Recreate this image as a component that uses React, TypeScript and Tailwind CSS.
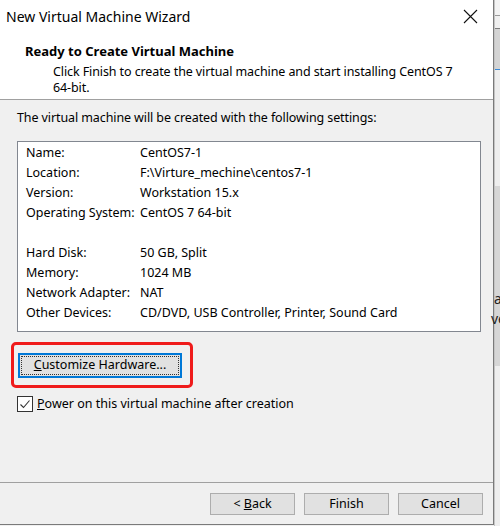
import React from 'react'

const rows: [string, string][] = [
	['Name:', 'CentOS7-1'],
	['Location:', 'F:\\Virture_mechine\\centos7-1'],
	['Version:', 'Workstation 15.x'],
	['Operating System:', 'CentOS 7 64-bit'],
	['', ''],
	['Hard Disk:', '50 GB, Split'],
	['Memory:', '1024 MB'],
	['Network Adapter:', 'NAT'],
	['Other Devices:', 'CD/DVD, USB Controller, Printer, Sound Card'],
]

function WinButton({ children, className = '' }: { children: React.ReactNode; className?: string }) {
	return (
		<div className={`flex items-center justify-center h-[22px] w-[85px] border border-[#adadad] bg-[#e1e1e1] ${className}`}>
			{children}
		</div>
	)
}

export default function App() {
	return (
		<div className="flex w-[500px] h-[526px] bg-[#f0f0f0] text-[12.5px] text-black font-['Noto_Sans',sans-serif] overflow-hidden">
			{/* WINDOW */}
			<div className="flex flex-col w-[494px] h-[525px] shrink-0 bg-[#f0f0f0] border-r border-b border-[#7a7a7a]">
				{/* TITLE BAR */}
				<div className="flex items-center justify-between h-[33px] bg-white pl-[6px] pr-[14px]">
					<span className="text-[14px] leading-none">New Virtual Machine Wizard</span>
					<svg width="15" height="15" viewBox="0 0 15 15" className="mr-[1px]">
						<path d="M1 1 L14 14 M14 1 L1 14" stroke="#111" strokeWidth="1.1" />
					</svg>
				</div>

				{/* HEADER */}
				<div className="flex flex-col h-[67px] bg-white border-b border-[#a0a0a0] pt-[9px]">
					<div className="pl-[25px] font-bold text-[13px] leading-[18px]">Ready to Create Virtual Machine</div>
					<div className="pl-[53px] pr-[26px] leading-[16px] mt-[4px] tracking-[-0.1px]">
						Click Finish to create the virtual machine and start installing CentOS 7 64-bit.
					</div>
				</div>

				{/* BODY */}
				<div className="flex flex-col flex-1 px-[17px]">
					<div className="h-[41px] pt-[9px] leading-[18px] tracking-[-0.1px]">
						The virtual machine will be created with the following settings:
					</div>

					<div className="flex flex-col w-[464px] h-[191px] border border-[#828790] bg-white pl-[8px] pt-px">
						{rows.map(([k, v], i) => (
							<div key={i} className="flex h-[20px] items-center">
								<span className="w-[114px]">{k}</span>
								<span>{v}</span>
							</div>
						))}
					</div>

					{/* CUSTOMIZE */}
					<div className="mt-[10px] -ml-[6px] w-[182px] h-[46px] border-[3px] border-[#ef1b1b] rounded-[5px] flex items-center pl-[4px]">
						<div className="w-[164px] h-[25px] border-2 border-[#0078d7] bg-[#e1e1e1] p-px">
							<div className="h-full border border-dotted border-[#333] flex items-center justify-center">
								<span>
									<span className="underline">C</span>ustomize Hardware...
								</span>
							</div>
						</div>
					</div>

					<div className="flex items-center gap-[4px] mt-[7px]">
						<div className="w-[16px] h-[16px] border border-[#333] bg-white flex items-center justify-center">
							<svg width="12" height="12" viewBox="0 0 12 12">
								<path d="M1.5 6.5 L4.5 9.5 L10.5 2.5" stroke="#333" strokeWidth="1.1" fill="none" />
							</svg>
						</div>
						<span>
							<span className="underline">P</span>ower on this virtual machine after creation
						</span>
					</div>
				</div>

				{/* FOOTER */}
				<div className="flex justify-end gap-[9px] h-[42px] border-t border-[#a0a0a0] pt-[10px] pr-[10px]">
					<WinButton>
						<span>
							&lt; <span className="underline">B</span>ack
						</span>
					</WinButton>
					<WinButton>Finish</WinButton>
					<WinButton>Cancel</WinButton>
				</div>
			</div>

			{/* BACKGROUND APP */}
			<div className="flex flex-col flex-1 border-l border-[#c4c4c4]">
				<div className="h-[16px] bg-[#f3f3f3] border-b border-[#9a9a9a]" />
				<div className="h-[13px] bg-[#f0f0f0] border-b border-[#7c7c7c]" />
				<div className="h-[41px] bg-[#d4d4d4] border-b border-[#3b8ad8]" />
				<div className="h-[116px] bg-[#eeeeee]" />
				<div className="flex flex-col h-[180px] bg-[#d6d6d6] pt-[103px] text-[14px] leading-[20px] text-[#222]">
					<span className="-ml-px">a</span>
					<span className="-ml-[4px]">ve</span>
				</div>
				<div className="flex-1 bg-[#eeeeee]" />
			</div>
		</div>
	)
}
